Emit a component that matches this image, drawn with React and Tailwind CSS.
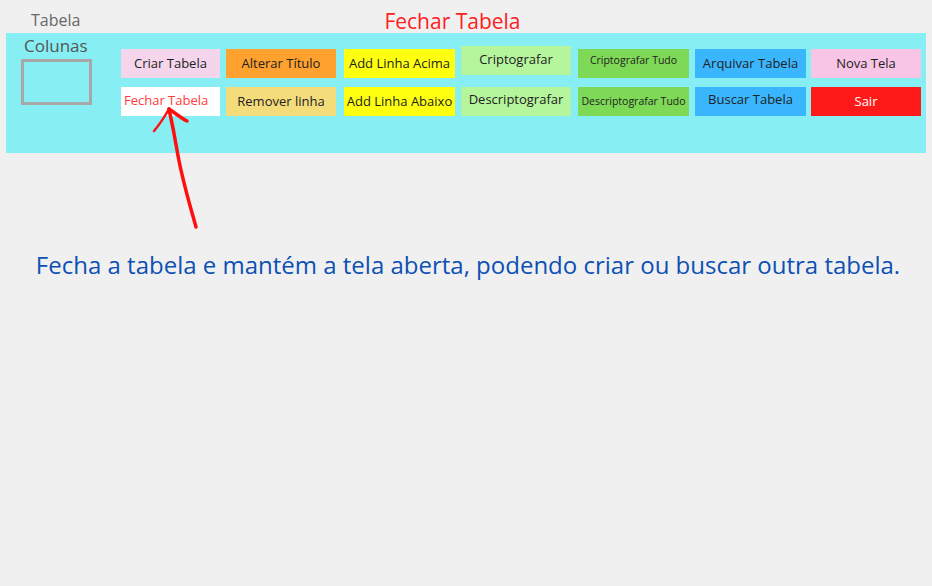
import React from "react";

const Btn = ({ bg, color = "text-[#222]", size = "text-[13px]", extra = "", children, w }) => (
  <div
    className={`${bg} ${color} ${size} ${extra} h-[29px] flex items-center justify-center whitespace-nowrap`}
    style={{ width: w }}
  >
    {children}
  </div>
);

export default function App() {
  return (
    <div
      className="relative w-[932px] h-[586px] bg-[#f0f0f0] overflow-hidden"
      style={{ fontFamily: '"Open Sans", "Noto Sans", sans-serif' }}
    >
      {/* top row */}
      <div className="flex h-[33px]">
        <div className="ml-[31px] mt-[9px] text-[16px] leading-[22px] text-[#666]">Tabela</div>
        <div className="ml-[304px] mt-[7px] text-[21px] leading-[28px] text-[#ff2020]">Fechar Tabela</div>
      </div>

      {/* panel */}
      <div className="mx-[6px] h-[120px] bg-[#87eff3] flex items-start">
        <div className="w-[115px] pl-[15px] pt-[3px] flex flex-col items-start">
          <div className="ml-[3px] text-[17px] leading-[20px] text-[#555]">Colunas</div>
          <div className="mt-[3px] w-[71px] h-[46px] border-[3px] border-[#a8a8a8]" />
        </div>
        <div className="pt-[16px] grid content-start grid-cols-[105px_118px_117px_117px_117px_116px_110px] gap-y-[9px]">
          <Btn bg="bg-[#f5d5eb]" w={99}>Criar Tabela</Btn>
          <Btn bg="bg-[#ffa12e]" w={110}>Alterar Título</Btn>
          <Btn bg="bg-[#ffff10]" w={111}>Add Linha Acima</Btn>
          <Btn bg="bg-[#b5f59c]" w={110} extra="-mt-[3px] pb-[1px]">Criptografar</Btn>
          <Btn bg="bg-[#7ed957]" w={111} size="text-[10.5px]" extra="items-start pt-[4px]">Criptografar Tudo</Btn>
          <Btn bg="bg-[#3ab6ff]" w={111}>Arquivar Tabela</Btn>
          <Btn bg="bg-[#f8c5e6]" w={110}>Nova Tela</Btn>

          <Btn bg="bg-white" w={99} color="text-[#ff3b3b]" extra="justify-start pl-[3px] pb-[1px]">Fechar Tabela</Btn>
          <Btn bg="bg-[#f5dc7b]" w={110}>Remover linha</Btn>
          <Btn bg="bg-[#ffff10]" w={111} extra="pt-[1px]">Add Linha Abaixo</Btn>
          <Btn bg="bg-[#b5f59c]" w={110} extra="pb-[3px]">Descriptografar</Btn>
          <Btn bg="bg-[#7ed957]" w={111} size="text-[10.5px]">Descriptografar Tudo</Btn>
          <Btn bg="bg-[#3ab6ff]" w={111} extra="pb-[3px]">Buscar Tabela</Btn>
          <Btn bg="bg-[#ff1a1a]" w={110} color="text-white">Sair</Btn>
        </div>
      </div>

      {/* description */}
      <div className="mt-[95px] pl-[4px] text-center text-[24px] leading-[33px] text-[#0d50b4] whitespace-nowrap">
        Fecha a tabela e mantém a tela aberta, podendo criar ou buscar outra tabela.
      </div>

      {/* arrow */}
      <svg className="absolute left-0 top-0" width="932" height="586" viewBox="0 0 932 586" fill="none">
        <path
          d="M196 227 C 190 205, 182 180, 177 150 C 174 132, 171 118, 169 109"
          stroke="#ff1010"
          strokeWidth="3.5"
          strokeLinecap="round"
        />
        <path d="M154 131 C 160 124, 165 116, 169 109" stroke="#ff1010" strokeWidth="2.5" strokeLinecap="round" />
        <path d="M169 109 C 175 113, 181 118, 187 121" stroke="#ff1010" strokeWidth="3.5" strokeLinecap="round" />
      </svg>
    </div>
  );
}
